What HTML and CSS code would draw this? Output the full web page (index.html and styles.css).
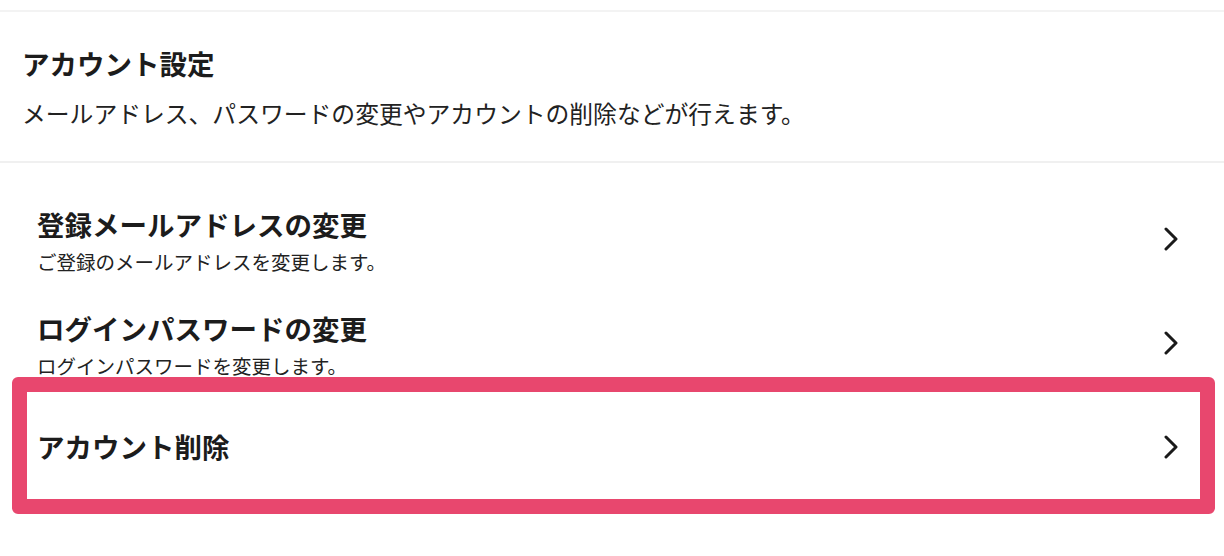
FILE: index.html
```html
<!DOCTYPE html>
<html lang="ja">
<head>
<meta charset="utf-8">
<title>アカウント設定</title>
<link rel="stylesheet" href="styles.css">
</head>
<body>
<div class="page">
  <header class="head">
    <h1 class="head-title">アカウント設定</h1>
    <p class="head-desc">メールアドレス、パスワードの変更やアカウントの削除などが行えます。</p>
  </header>
  <ul class="menu">
    <li class="item">
      <div class="item-text">
        <div class="item-title">登録メールアドレスの変更</div>
        <div class="item-sub">ご登録のメールアドレスを変更します。</div>
      </div>
      <svg class="chev" viewBox="0 0 14 24" width="14" height="24"><polyline points="2,2 12,12 2,22"/></svg>
    </li>
    <li class="item">
      <div class="item-text">
        <div class="item-title">ログインパスワードの変更</div>
        <div class="item-sub">ログインパスワードを変更します。</div>
      </div>
      <svg class="chev" viewBox="0 0 14 24" width="14" height="24"><polyline points="2,2 12,12 2,22"/></svg>
    </li>
    <li class="highlight">
      <div class="item item-single">
        <div class="item-text">
          <div class="item-title">アカウント削除</div>
        </div>
        <svg class="chev" viewBox="0 0 14 24" width="14" height="24"><polyline points="2,2 12,12 2,22"/></svg>
      </div>
    </li>
  </ul>
</div>
</body>
</html>
```

FILE: styles.css
```css
* { box-sizing: border-box; }
html, body {
  margin: 0;
  padding: 0;
  background: #ffffff;
}
body {
  font-family: "Noto Sans CJK JP", "Noto Sans", sans-serif;
  color: #1c1c1c;
  width: 1224px;
  height: 556px;
  overflow: hidden;
}
.page {
  margin-top: 10px;
  border-top: 2px solid #f3f3f3;
}
.head {
  padding: 31px 22px 30px;
  border-bottom: 2px solid #f0f0f0;
}
.head-title {
  margin: 0;
  font-size: 27.5px;
  line-height: 40px;
  font-weight: 700;
}
.head-desc {
  margin: 12px 0 0;
  font-size: 23.8px;
  line-height: 36px;
  font-weight: 400;
  color: #222;
}
.menu {
  list-style: none;
  margin: 0;
  padding: 28px 0 0;
}
.item {
  display: flex;
  align-items: center;
  justify-content: space-between;
  padding: 13px 46px 15px 37px;
}
.item-title {
  font-size: 27.5px;
  line-height: 40px;
  font-weight: 700;
}
.item-sub {
  font-size: 19.5px;
  line-height: 36px;
  color: #222;
}
.chev {
  flex: none;
  margin-top: -6px;
}
.chev polyline {
  fill: none;
  stroke: #1a1a1a;
  stroke-width: 3;
  stroke-linecap: round;
  stroke-linejoin: round;
}
.highlight {
  margin: -22px 9px 0 12px;
  border: 15px solid #e8476e;
  border-radius: 6px;
  position: relative;
}
.item-single {
  height: 107px;
  padding: 0 22px 0 10px;
}
.item-single .chev {
  margin-top: 2px;
}
```
